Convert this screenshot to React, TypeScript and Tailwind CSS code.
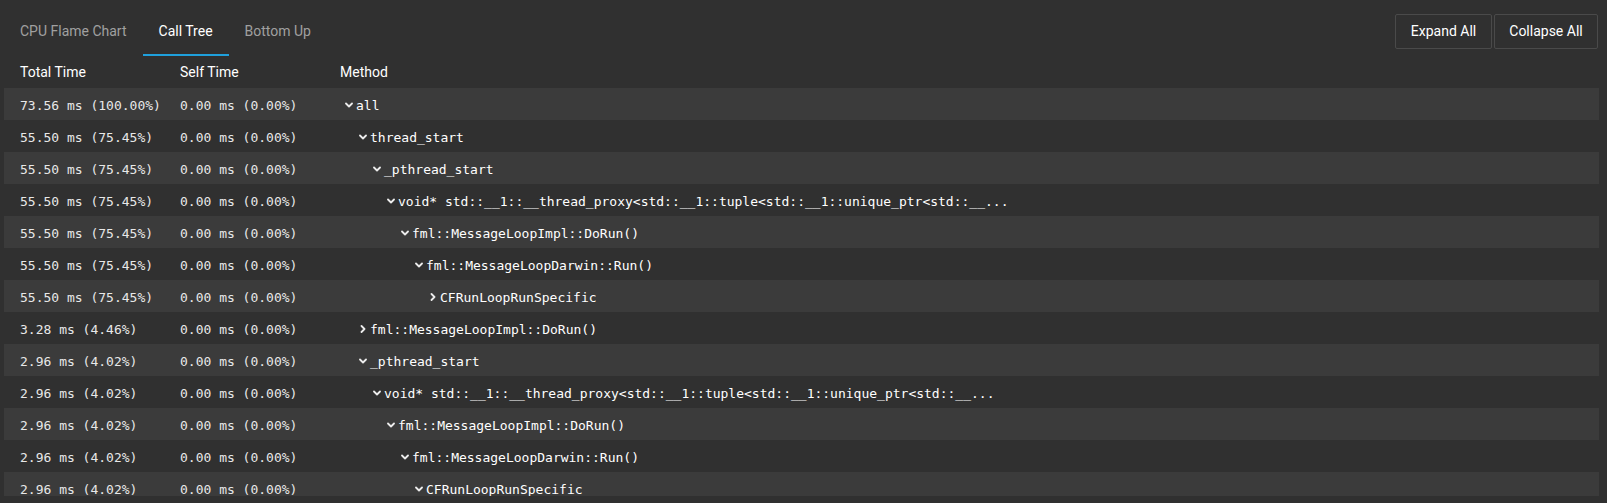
import React from 'react';

interface Row {
  total: string;
  self: string;
  method: string;
  depth: number;
  expanded: boolean;
}

const VOID_PROXY =
  'void* std::__1::__thread_proxy<std::__1::tuple<std::__1::unique_ptr<std::__...';

const rows: Row[] = [
  { total: '73.56 ms (100.00%)', self: '0.00 ms (0.00%)', method: 'all', depth: 0, expanded: true },
  { total: '55.50 ms (75.45%)', self: '0.00 ms (0.00%)', method: 'thread_start', depth: 1, expanded: true },
  { total: '55.50 ms (75.45%)', self: '0.00 ms (0.00%)', method: '_pthread_start', depth: 2, expanded: true },
  { total: '55.50 ms (75.45%)', self: '0.00 ms (0.00%)', method: VOID_PROXY, depth: 3, expanded: true },
  { total: '55.50 ms (75.45%)', self: '0.00 ms (0.00%)', method: 'fml::MessageLoopImpl::DoRun()', depth: 4, expanded: true },
  { total: '55.50 ms (75.45%)', self: '0.00 ms (0.00%)', method: 'fml::MessageLoopDarwin::Run()', depth: 5, expanded: true },
  { total: '55.50 ms (75.45%)', self: '0.00 ms (0.00%)', method: 'CFRunLoopRunSpecific', depth: 6, expanded: false },
  { total: '3.28 ms (4.46%)', self: '0.00 ms (0.00%)', method: 'fml::MessageLoopImpl::DoRun()', depth: 1, expanded: false },
  { total: '2.96 ms (4.02%)', self: '0.00 ms (0.00%)', method: '_pthread_start', depth: 1, expanded: true },
  { total: '2.96 ms (4.02%)', self: '0.00 ms (0.00%)', method: VOID_PROXY, depth: 2, expanded: true },
  { total: '2.96 ms (4.02%)', self: '0.00 ms (0.00%)', method: 'fml::MessageLoopImpl::DoRun()', depth: 3, expanded: true },
  { total: '2.96 ms (4.02%)', self: '0.00 ms (0.00%)', method: 'fml::MessageLoopDarwin::Run()', depth: 4, expanded: true },
  { total: '2.96 ms (4.02%)', self: '0.00 ms (0.00%)', method: 'CFRunLoopRunSpecific', depth: 5, expanded: true },
];

const tabs = ['CPU Flame Chart', 'Call Tree', 'Bottom Up'];

function Chevron({ open }: { open: boolean }) {
  return (
    <svg width="8" height="8" viewBox="0 0 8 8" className="shrink-0 mb-[2px]">
      <path
        d={open ? 'M1 2.5 L4 5.5 L7 2.5' : 'M2.5 1 L5.5 4 L2.5 7'}
        fill="none"
        stroke="#ececec"
        strokeWidth="1.8"
        strokeLinecap="round"
        strokeLinejoin="round"
      />
    </svg>
  );
}

export default function App() {
  return (
    <div className="w-full h-[503px] overflow-hidden bg-[#303030] text-[#e8e8e8] font-['Roboto',sans-serif]">
      {/* Tabs + actions */}
      <div className="flex items-start justify-between">
        <div className="flex pl-[4px]">
          {tabs.map((tab) => {
            const active = tab === 'Call Tree';
            return (
              <div
                key={tab}
                className={`h-[56px] px-4 pt-2 flex items-center text-[14px] border-b-2 ${
                  active ? 'border-[#1fa0dc] text-white' : 'border-transparent text-[#a0a0a0]'
                }`}
              >
                {tab}
              </div>
            );
          })}
        </div>
        <div className="flex gap-[2px] mt-[14px] mr-[9px]">
          <button className="h-[35px] w-[97px] rounded-[2px] border border-[#4a4a4a] text-[14px] text-white">
            Expand All
          </button>
          <button className="h-[35px] w-[104px] rounded-[2px] border border-[#4a4a4a] text-[14px] text-white">
            Collapse All
          </button>
        </div>
      </div>

      {/* Column headers */}
      <div className="flex items-center h-[32px] pl-[20px] text-[14px] text-white">
        <div className="w-[160px]">Total Time</div>
        <div className="w-[160px]">Self Time</div>
        <div>Method</div>
      </div>

      {/* Tree rows */}
      <div className="ml-[4px] mr-[8px] h-[408px] overflow-hidden font-['DejaVu_Sans_Mono',monospace] text-[13px]">
        {rows.map((row, i) => (
          <div
            key={i}
            className={`flex items-center h-[32px] pt-[3px] pl-[16px] whitespace-nowrap ${
              i % 2 === 0 ? 'bg-[#3b3b3b]' : 'bg-[#303030]'
            }`}
          >
            <div className="w-[160px]">{row.total}</div>
            <div className="w-[160px]">{row.self}</div>
            <div className="flex items-center gap-[3px]" style={{ paddingLeft: 5 + row.depth * 14 }}>
              <Chevron open={row.expanded} />
              <span className="text-white">{row.method}</span>
            </div>
          </div>
        ))}
      </div>
    </div>
  );
}
